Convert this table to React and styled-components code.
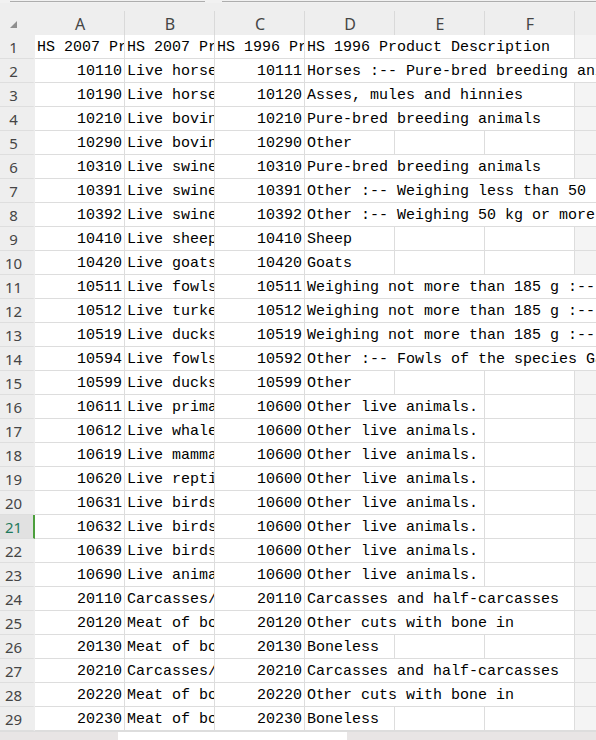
import React from "react";
import styled, { createGlobalStyle } from "styled-components";

const COLS = ["A", "B", "C", "D", "E", "F", "G"];
const CHAR_W = 9;
const COL_W = 90;
const ACTIVE_ROW = 21;

const rows = [
  ["HS 2007 Product Code", "HS 2007 Product Description", "HS 1996 Product Code", "HS 1996 Product Description"],
  [10110, "Live horses", 10111, "Horses :-- Pure-bred breeding animals"],
  [10190, "Live horses", 10120, "Asses, mules and hinnies"],
  [10210, "Live bovine animals", 10210, "Pure-bred breeding animals"],
  [10290, "Live bovine animals", 10290, "Other"],
  [10310, "Live swine", 10310, "Pure-bred breeding animals"],
  [10391, "Live swine", 10391, "Other :-- Weighing less than 50 kg"],
  [10392, "Live swine", 10392, "Other :-- Weighing 50 kg or more"],
  [10410, "Live sheep", 10410, "Sheep"],
  [10420, "Live goats", 10420, "Goats"],
  [10511, "Live fowls", 10511, "Weighing not more than 185 g :-- Fowls of the species Gallus domesticus"],
  [10512, "Live turkeys", 10512, "Weighing not more than 185 g :-- Turkeys"],
  [10519, "Live ducks", 10519, "Weighing not more than 185 g :-- Other"],
  [10594, "Live fowls", 10592, "Other :-- Fowls of the species Gallus domesticus"],
  [10599, "Live ducks", 10599, "Other"],
  [10611, "Live primates", 10600, "Other live animals."],
  [10612, "Live whales", 10600, "Other live animals."],
  [10619, "Live mammals", 10600, "Other live animals."],
  [10620, "Live reptiles", 10600, "Other live animals."],
  [10631, "Live birds of prey", 10600, "Other live animals."],
  [10632, "Live birds", 10600, "Other live animals."],
  [10639, "Live birds, other", 10600, "Other live animals."],
  [10690, "Live animals", 10600, "Other live animals."],
  [20110, "Carcasses/half", 20110, "Carcasses and half-carcasses"],
  [20120, "Meat of bovine", 20120, "Other cuts with bone in"],
  [20130, "Meat of bovine", 20130, "Boneless"],
  [20210, "Carcasses/half", 20210, "Carcasses and half-carcasses"],
  [20220, "Meat of bovine", 20220, "Other cuts with bone in"],
  [20230, "Meat of bovine", 20230, "Boneless"],
];

// how many columns the text in D spills over (D..G)
const spanFor = (text) => {
  const w = 2 + String(text).length * CHAR_W;
  return Math.min(4, Math.max(1, Math.ceil((w + 1) / COL_W)));
};

export default function App() {
  return (
    <>
      <GlobalStyle />
      <Frame>
        <TopBar>
          <NameBox />
          <FormulaBox />
        </TopBar>
        <Sheet>
          <Corner>
            <svg width="8" height="8" viewBox="0 0 8 8">
              <polygon points="7,0 7,7 0,7" fill="#8f8f8f" />
            </svg>
          </Corner>
          {COLS.map((c) => (
            <ColHeader key={c}>{c}</ColHeader>
          ))}
          {rows.map((r, i) => {
            const n = i + 1;
            const [a, b, c, d] = r;
            const isNum = typeof a === "number";
            const span = spanFor(d);
            const rest = [];
            for (let k = span; k < 4; k++) {
              rest.push(<Cell key={k} $shade={k === 3} />);
            }
            return (
              <React.Fragment key={n}>
                <RowHeader $active={n === ACTIVE_ROW}>{n}</RowHeader>
                <Cell $right={isNum}>{a}</Cell>
                <Cell>{b}</Cell>
                <Cell $right={isNum}>{c}</Cell>
                <Cell style={{ gridColumn: `span ${span}` }}>{d}</Cell>
                {rest}
              </React.Fragment>
            );
          })}
        </Sheet>
        <BottomBar>
          <ScrollLeft />
          <ScrollGap />
          <ScrollRight />
        </BottomBar>
      </Frame>
    </>
  );
}

const GlobalStyle = createGlobalStyle`
  html, body {
    margin: 0;
    padding: 0;
    background: #fff;
    overflow: hidden;
  }
`;

const Frame = styled.div`
  width: 596px;
  height: 740px;
  overflow: hidden;
  display: flex;
  flex-direction: column;
  background: #fff;
`;

const TopBar = styled.div`
  height: 3px;
  flex: none;
  display: flex;
  gap: 17px;
  padding-left: 10px;
  background: #f1f1f1;
`;

const NameBox = styled.div`
  width: 195px;
  height: 1px;
  border-bottom: 1px solid #adadad;
`;

const FormulaBox = styled.div`
  flex: 1;
  height: 1px;
  border-bottom: 1px solid #adadad;
`;

const Sheet = styled.div`
  flex: none;
  display: grid;
  grid-template-columns: 35px repeat(7, ${COL_W}px);
  grid-template-rows: 32px repeat(29, 24px);
  width: 665px;
  font-family: "Liberation Mono", "DejaVu Sans Mono", monospace;
  font-size: 15px;
  color: #000;
`;

const Corner = styled.div`
  background: #eeeeee;
  display: flex;
  align-items: flex-start;
  padding: 18px 0 0 10px;
  box-sizing: border-box;
`;

const ColHeader = styled.div`
  position: relative;
  background: #eeeeee;
  display: flex;
  align-items: center;
  justify-content: center;
  padding-top: 10px;
  box-sizing: border-box;
  font-family: "Noto Sans", "Liberation Sans", sans-serif;
  font-size: 16px;
  color: #454545;

  &::after {
    content: "";
    position: absolute;
    right: 0;
    top: 8px;
    bottom: 0;
    width: 1px;
    background: #d9d9d9;
  }
`;

const RowHeader = styled.div`
  background: ${(p) => (p.$active ? "#e1e1e1" : "#eeeeee")};
  color: ${(p) => (p.$active ? "#1e7a5e" : "#454545")};
  border-bottom: 1px solid #dedede;
  border-right: 2px solid ${(p) => (p.$active ? "#4c9f3c" : "#eeeeee")};
  box-sizing: border-box;
  display: flex;
  align-items: center;
  justify-content: center;
  padding: 1px 6px 0 0;
  font-family: "Noto Sans", "Liberation Sans", sans-serif;
  font-size: 15px;
`;

const Cell = styled.div`
  box-sizing: border-box;
  border-right: 1px solid #dddddd;
  border-bottom: 1px solid #dddddd;
  background: ${(p) => (p.$shade ? "#f4f4f4" : "#fff")};
  padding: 2px 2px 0;
  line-height: 21px;
  white-space: nowrap;
  overflow: hidden;
  text-align: ${(p) => (p.$right ? "right" : "left")};
`;

const BottomBar = styled.div`
  flex: 1;
  display: flex;
  border-top: 1px solid #dddddd;
`;

const ScrollLeft = styled.div`
  width: 118px;
  background: #e8e5e5;
`;

const ScrollGap = styled.div`
  width: 229px;
  background: #fff;
`;

const ScrollRight = styled.div`
  flex: 1;
  background: #e8e5e5;
`;
